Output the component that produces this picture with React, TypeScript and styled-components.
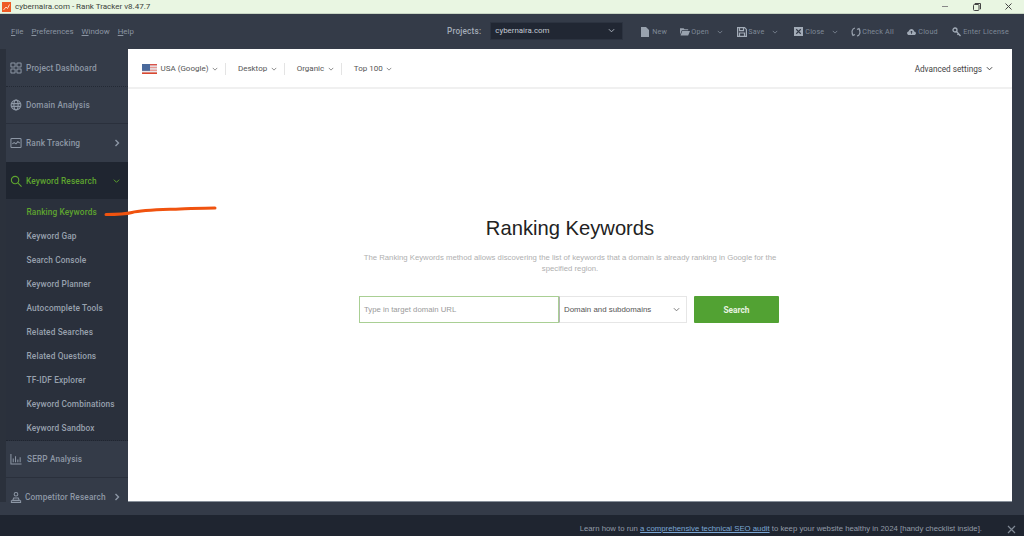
import React from "react";
import styled, { createGlobalStyle } from "styled-components";

const Global = createGlobalStyle`
  html, body { margin: 0; padding: 0; background: #343b48; }
  #root { width: 1024px; height: 536px; overflow: hidden; }
  * { box-sizing: border-box; }
`;

const Page = styled.div`
  position: relative;
  width: 1024px;
  height: 536px;
  display: flex;
  flex-direction: column;
  background: #343b48;
  font-family: "Roboto", "Liberation Sans", sans-serif;
  overflow: hidden;
`;

const TitleBar = styled.div`
  height: 14px;
  flex: none;
  display: flex;
  align-items: center;
  background: #e9f6e2;
  border-bottom: 1px solid #c9d6c4;
  padding-left: 2px;
  color: #3b3f3a;
  font: 8px "Roboto", sans-serif;
`;
const TitleText = styled.span`
  margin-left: 4px;
  flex: 1;
`;
const WinButtons = styled.div`
  display: flex;
  align-items: center;
  gap: 24px;
  padding-right: 12px;
  color: #444;
`;

const MenuBar = styled.div`
  height: 35px;
  flex: none;
  display: flex;
  align-items: center;
  padding-left: 11px;
  background: #343b48;
`;
const MenuItems = styled.div`
  display: flex;
  gap: 8px;
  width: 436px;
`;
const MenuItem = styled.span`
  font: 7.9px "Roboto", sans-serif;
  color: #8b95a3;
  &::first-letter { text-decoration: underline; }
`;
const ProjectsLabel = styled.span`
  font: 500 8.2px "Roboto", sans-serif;
  color: #a4adb9;
  letter-spacing: 0.2px;
  margin: 0 9px 2px 0;
`;
const ProjectSelect = styled.div`
  width: 133px;
  height: 18px;
  margin-bottom: 2px;
  display: flex;
  align-items: center;
  justify-content: space-between;
  padding: 0 7px 0 4px;
  background: #212733;
  border: 1px solid #2c3340;
  color: #c3cad3;
  font: 7.9px "Roboto", sans-serif;
`;
const Tools = styled.div`
  display: flex;
  align-items: center;
  margin-left: 18px;
`;
const Tool = styled.span<{ $w: number }>`
  width: ${(p) => p.$w}px;
  display: flex;
  align-items: center;
  font: 7.2px "Roboto", sans-serif;
  letter-spacing: 0.2px;
  color: #7f8997;
  white-space: nowrap;
`;
const ToolIcon = styled.span`
  width: 11px;
  flex: none;
  display: flex;
`;
const ToolMore = styled.span`
  margin-left: 8px;
  display: flex;
`;

const Body = styled.div`
  height: 453px;
  flex: none;
  display: flex;
`;
const Side = styled.aside`
  width: 128px;
  flex: none;
  border-left: 6px solid #2b313c;
  display: flex;
  flex-direction: column;
`;
const NavRow = styled.div<{ $h: number; $active?: boolean; $line?: string }>`
  height: ${(p) => p.$h}px;
  flex: none;
  position: relative;
  display: flex;
  align-items: center;
  padding-left: 4px;
  background: ${(p) => (p.$active ? "#1f2530" : "transparent")};
  border-bottom: ${(p) => p.$line || "none"};
  color: ${(p) => (p.$active ? "#5ea42f" : "#8d97a5")};
`;
const NavIcon = styled.span`
  width: 16px;
  height: 16px;
  display: flex;
  align-items: center;
  justify-content: flex-start;
  flex: none;
`;
const NavLabel = styled.span<{ $gap?: number }>`
  margin-left: ${(p) => p.$gap ?? 0}px;
  font: 500 8.3px "Roboto", sans-serif;
  letter-spacing: 0.12px;
  white-space: nowrap;
`;
const NavChevron = styled.span`
  position: absolute;
  right: 8px;
  top: 50%;
  transform: translateY(-50%);
  display: flex;
`;
const SubMenu = styled.div`
  height: 242px;
  flex: none;
  padding-top: 1px;
  background: #2a303c;
  border-bottom: 1px dotted #1f2530;
`;
const SubItem = styled.div<{ $active?: boolean }>`
  height: 24px;
  display: flex;
  align-items: center;
  padding-left: 20.5px;
  font: 500 8.3px "Roboto", sans-serif;
  letter-spacing: 0.12px;
  color: ${(p) => (p.$active ? "#5ea42f" : "#98a1ae")};
`;

const Panel = styled.main`
  width: 884px;
  flex: none;
  display: flex;
  flex-direction: column;
  background: #fff;
  border-bottom: 1px solid #88909a;
`;
const Filters = styled.div`
  height: 40px;
  flex: none;
  display: flex;
  align-items: center;
  padding: 1px 19px 0 14px;
  border-bottom: 2px solid #f0f0f0;
  font: 8px "Roboto", "Liberation Sans", sans-serif;
  color: #555;
`;
const Filter = styled.span<{ $sep?: boolean }>`
  display: flex;
  align-items: center;
  gap: 3.5px;
  height: 12px;
  padding-right: 7px;
  margin-right: 12px;
  border-right: ${(p) => (p.$sep ? "1px solid #e4e4e4" : "none")};
`;
const Advanced = styled.span`
  margin-left: auto;
  display: flex;
  align-items: center;
  gap: 4px;
  font-size: 8.2px;
  color: #444;
`;
const Center = styled.div`
  flex: 1;
  display: flex;
  flex-direction: column;
  align-items: center;
  padding-top: 126px;
`;
const Heading = styled.h1`
  margin: 0;
  font: 400 20.2px/26px "Liberation Sans", Arial, sans-serif;
  color: #222;
`;
const Description = styled.p`
  width: 430px;
  margin: 11px 0 0;
  text-align: center;
  font: 7.75px/11px "Liberation Sans", Arial, sans-serif;
  color: #b0b0b0;
`;
const SearchRow = styled.div`
  display: flex;
  align-items: center;
  margin: 22px 0 0 -2px;
`;
const UrlBox = styled.div`
  width: 200px;
  height: 27px;
  display: flex;
  align-items: center;
  padding-left: 4px;
  border: 1px solid #a9cf94;
  font: 7.75px "Liberation Sans", Arial, sans-serif;
  color: #9a9a9a;
`;
const ScopeBox = styled.div`
  width: 128px;
  height: 27px;
  display: flex;
  align-items: center;
  justify-content: space-between;
  padding: 0 6px 0 4px;
  border: 1px solid #e6e6e6;
  border-left: 1px solid #b5b5b5;
  font: 7.9px "Liberation Sans", Arial, sans-serif;
  color: #555;
`;
const SearchButton = styled.div`
  width: 85px;
  height: 27px;
  margin-left: 7px;
  display: flex;
  align-items: center;
  justify-content: center;
  background: #52a233;
  border-radius: 1px;
  color: #e8f3e2;
  font: 700 8.3px "Roboto", sans-serif;
`;

const Gutter = styled.div`
  height: 13px;
  flex: none;
  background: #343b48;
`;
const Footer = styled.footer`
  flex: 1;
  position: relative;
  background: #1f2530;
  display: flex;
  align-items: flex-end;
  justify-content: flex-end;
  padding: 0 42px 3px 0;
  font: 7.78px "Liberation Sans", Arial, sans-serif;
  color: #939ca8;
  white-space: nowrap;
`;
const FooterLink = styled.span`
  color: #7ba7d6;
  text-decoration: underline;
`;
const FooterClose = styled.span`
  position: absolute;
  right: 8px;
  bottom: 2px;
  display: flex;
`;
const Scribble = styled.svg`
  position: absolute;
  left: 100px;
  top: 200px;
`;

const Chevron = ({ c = "#777", s = 7 }: { c?: string; s?: number }) => (
  <svg width={s} height={s} viewBox="0 0 8 8" fill="none" stroke={c} strokeWidth="1.1">
    <path d="M1 2.500 4 5.500 7 2.500" />
  </svg>
);
const Right = ({ c = "#8d97a5" }: { c?: string }) => (
  <svg width="6" height="8" viewBox="0 0 6 8" fill="none" stroke={c} strokeWidth="1.4">
    <path d="M1.500 1 4.500 4 1.500 7" />
  </svg>
);
const ico = { width: 12, height: 12, viewBox: "0 0 13 13", fill: "none", stroke: "currentColor", strokeWidth: 1.1 };

const Flag = () => (
  <svg width="15" height="10" viewBox="0 0 15 10">
    <rect width="15" height="10" fill="#e8e8ee" />
    <rect y="0" width="15" height="1.400" fill="#d9534a" />
    <rect y="2.800" width="15" height="1.400" fill="#e79a93" />
    <rect y="5.600" width="15" height="1.400" fill="#e79a93" />
    <rect y="8.400" width="15" height="1.600" fill="#d9482f" />
    <rect width="8" height="6.800" fill="#4a6a9c" />
  </svg>
);

const tools: { w: number; label: string; more?: boolean; icon: React.ReactNode }[] = [
  { w: 39, label: "New", icon: <svg width="8" height="10" viewBox="0 0 8 10"><path d="M0 0h5l3 3v7H0z" fill="#99a2ae" /></svg> },
  { w: 57, label: "Open", more: true, icon: <svg width="10" height="9" viewBox="0 0 11 9"><path d="M0 1h4l1 1h4v1H2L0 8zM2.500 4H11L9 9H.6z" fill="#99a2ae" /></svg> },
  { w: 57, label: "Save", more: true, icon: <svg width="10" height="10" viewBox="0 0 10 10" fill="none" stroke="#a3acb8" strokeWidth="1.200"><path d="M.6.600h7l1.800 1.800v7H.6zM2.500.600v3h4v-3M2.500 9.400V6h5v3.400" /></svg> },
  { w: 57, label: "Close", more: true, icon: <svg width="9" height="9" viewBox="0 0 10 10"><rect width="10" height="10" fill="#a3acb8" /><path d="M2.500 2.500l5 5M7.500 2.500l-5 5" stroke="#343b48" strokeWidth="1.200" /></svg> },
  { w: 56, label: "Check All", icon: <svg width="10" height="10" viewBox="0 0 10 10" fill="none" stroke="#99a2ae" strokeWidth="1.200"><path d="M4 1C1 1.500.2 5 2 8M6 9c3-.5 3.800-4 2-7" /><path d="M1 6.500 2 8.500 4 7.500M9 3.500 8 1.500 6 2.500" /></svg> },
  { w: 45, label: "Cloud", icon: <svg width="9" height="8" viewBox="0 0 10 9"><path d="M2.500 8C1 8 0 7 0 5.700 0 4.500 1 3.800 1.800 3.800 2.200 2 3.500 1 5 1c1.500 0 2.700 1 3 2.800 1.100.1 2 1 2 2.100C10 7.100 9 8 7.800 8z" fill="#a3acb8" /><path d="M5 3.500v3M3.800 4.800 5 3.500l1.200 1.300" stroke="#343b48" fill="none" /></svg> },
  { w: 60, label: "Enter License", icon: <svg width="9" height="10" viewBox="0 0 9 10" fill="none" stroke="#a3acb8" strokeWidth="1.300"><circle cx="3" cy="3" r="2" /><path d="M4.500 4.500 8.500 9M6.500 6.500 5.500 8" /></svg> },
];

const subs = ["Ranking Keywords", "Keyword Gap", "Search Console", "Keyword Planner", "Autocomplete Tools", "Related Searches", "Related Questions", "TF-IDF Explorer", "Keyword Combinations", "Keyword Sandbox"];

export default function App() {
  return (
    <Page>
      <Global />
      <TitleBar>
        <svg width="9" height="10" viewBox="0 0 9 10">
          <rect width="9" height="10" fill="#ee5a24" />
          <path d="M1.500 8 4 5 5.500 6.500 7.500 2.500" stroke="#ffd9c4" strokeWidth="1" fill="none" />
        </svg>
        <TitleText>cybernaira.com - Rank Tracker v8.47.7</TitleText>
        <WinButtons>
          <svg width="7" height="7" viewBox="0 0 7 7"><path d="M0 3.500h6" stroke="#888" /></svg>
          <svg width="8" height="8" viewBox="0 0 8 8" fill="none" stroke="#444"><rect x=".5" y="1.500" width="5.500" height="6" rx="1" /><path d="M2 1V.5h5.500V6H7" /></svg>
          <svg width="7" height="7" viewBox="0 0 7 7" stroke="#444"><path d="M.5.500l6 6M6.500.500l-6 6" /></svg>
        </WinButtons>
      </TitleBar>
      <MenuBar>
        <MenuItems>
          <MenuItem>File</MenuItem>
          <MenuItem>Preferences</MenuItem>
          <MenuItem>Window</MenuItem>
          <MenuItem>Help</MenuItem>
        </MenuItems>
        <ProjectsLabel>Projects:</ProjectsLabel>
        <ProjectSelect>
          cybernaira.com
          <Chevron c="#aeb5bf" />
        </ProjectSelect>
        <Tools>
          {tools.map((t) => (
            <Tool key={t.label} $w={t.w}>
              <ToolIcon>{t.icon}</ToolIcon>
              {t.label}
              {t.more && <ToolMore><Chevron c="#7f8997" s={6} /></ToolMore>}
            </Tool>
          ))}
        </Tools>
      </MenuBar>
      <Body>
        <Side>
          <NavRow $h={38} $line="1px dotted #232934">
            <NavIcon>
              <svg {...ico}>
                <rect x="1" y="1" width="4.500" height="4.500" rx=".6" />
                <rect x="7.500" y="1" width="4.500" height="4.500" rx=".6" />
                <rect x="1" y="7.500" width="4.500" height="4.500" rx=".6" />
                <rect x="7.500" y="7.500" width="4.500" height="4.500" rx=".6" />
              </svg>
            </NavIcon>
            <NavLabel>Project Dashboard</NavLabel>
          </NavRow>
          <NavRow $h={37} $line="1px solid #2a303c">
            <NavIcon>
              <svg {...ico} strokeWidth={1.2}>
                <circle cx="6.500" cy="6.500" r="5.300" />
                <ellipse cx="6.500" cy="6.500" rx="2.300" ry="5.300" />
                <path d="M1.200 5h10.600M1.200 8h10.600" />
              </svg>
            </NavIcon>
            <NavLabel>Domain Analysis</NavLabel>
          </NavRow>
          <NavRow $h={38}>
            <NavIcon>
              <svg {...ico}>
                <rect x="1" y="1.500" width="11" height="10" rx="1" />
                <path d="M2.500 7.500 4.500 6 6.500 7.500 8.500 5l2 1.500" />
              </svg>
            </NavIcon>
            <NavLabel>Rank Tracking</NavLabel>
            <NavChevron><Right /></NavChevron>
          </NavRow>
          <NavRow $h={37} $active>
            <NavIcon>
              <svg {...ico} strokeWidth={1.2}>
                <circle cx="5.500" cy="5.500" r="4" />
                <path d="M8.500 8.500 12.500 12.500" />
              </svg>
            </NavIcon>
            <NavLabel>Keyword Research</NavLabel>
            <NavChevron><Chevron c="#5ea42f" /></NavChevron>
          </NavRow>
          <SubMenu>
            {subs.map((s, i) => (
              <SubItem key={s} $active={i === 0}>{s}</SubItem>
            ))}
          </SubMenu>
          <NavRow $h={37} $line="1px solid #2a303c">
            <NavIcon>
              <svg {...ico}>
                <path d="M1 1v11h11.500M3.500 6v4M6 3.500V10M8.500 7v3M11 4.500V10" />
              </svg>
            </NavIcon>
            <NavLabel $gap={1}>SERP Analysis</NavLabel>
          </NavRow>
          <NavRow $h={38}>
            <NavIcon>
              <svg {...ico}>
                <circle cx="6.500" cy="3.500" r="2" />
                <path d="M4 7.500h5l1 2.500H3zM1.500 10.500h10V12.500h-10z" />
              </svg>
            </NavIcon>
            <NavLabel $gap={-1}>Competitor Research</NavLabel>
            <NavChevron><Right /></NavChevron>
          </NavRow>
        </Side>
        <Panel>
          <Filters>
            <Filter $sep><Flag />USA (Google)<Chevron s={6} /></Filter>
            <Filter $sep>Desktop<Chevron s={6} /></Filter>
            <Filter $sep>Organic<Chevron s={6} /></Filter>
            <Filter>Top 100<Chevron s={6} /></Filter>
            <Advanced>Advanced settings<Chevron c="#444" s={7} /></Advanced>
          </Filters>
          <Center>
            <Heading>Ranking Keywords</Heading>
            <Description>
              The Ranking Keywords method allows discovering the list of keywords that a domain is already ranking in Google for the specified region.
            </Description>
            <SearchRow>
              <UrlBox>Type in target domain URL</UrlBox>
              <ScopeBox>Domain and subdomains<Chevron s={7} /></ScopeBox>
              <SearchButton>Search</SearchButton>
            </SearchRow>
          </Center>
        </Panel>
      </Body>
      <Gutter />
      <Footer>
        <span>
          Learn how to run <FooterLink>a comprehensive technical SEO audit</FooterLink> to keep your website healthy in 2024 [handy checklist inside].
        </span>
        <FooterClose>
          <svg width="9" height="9" viewBox="0 0 9 9" stroke="#7f8894" strokeWidth="1.200"><path d="M1 1l7 7M8 1 1 8" /></svg>
        </FooterClose>
      </Footer>
      <Scribble width="120" height="20" viewBox="0 0 120 20" fill="none">
        <path d="M6 14.500C14 14.500 24 14.500 32 12.500 42 10 60 9.800 80 9 95 8.500 105 8 115 8" stroke="#f0530f" strokeWidth="3" strokeLinecap="round" />
      </Scribble>
    </Page>
  );
}
